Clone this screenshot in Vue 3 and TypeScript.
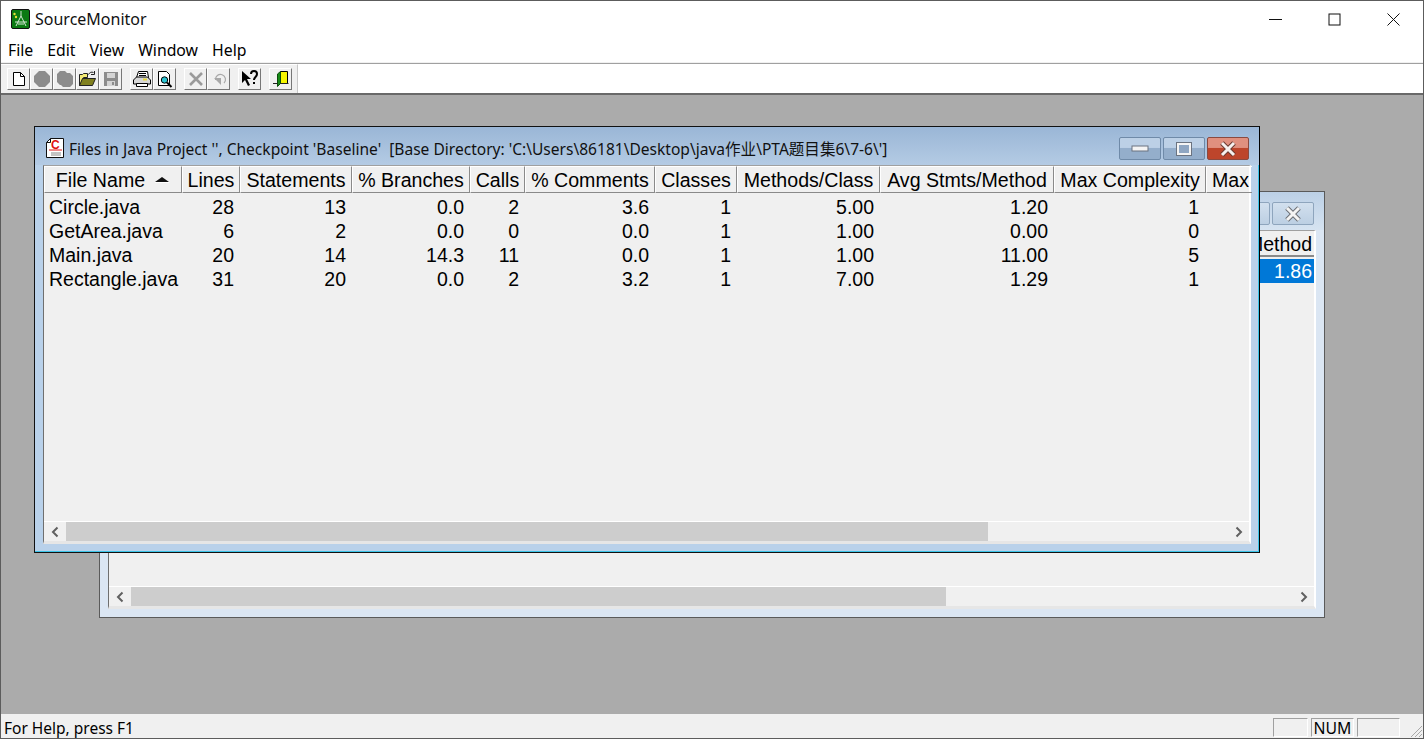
<script setup lang="ts">
// SourceMonitor main window with two MDI children
interface FileRow {
  name: string;
  values: string[];
}

const menus = ['File', 'Edit', 'View', 'Window', 'Help'];

const columns = [
  'Lines',
  'Statements',
  '% Branches',
  'Calls',
  '% Comments',
  'Classes',
  'Methods/Class',
  'Avg Stmts/Method',
  'Max Complexity',
];

const rows: FileRow[] = [
  { name: 'Circle.java', values: ['28', '13', '0.0', '2', '3.6', '1', '5.00', '1.20', '1'] },
  { name: 'GetArea.java', values: ['6', '2', '0.0', '0', '0.0', '1', '1.00', '0.00', '0'] },
  { name: 'Main.java', values: ['20', '14', '14.3', '11', '0.0', '1', '1.00', '11.00', '5'] },
  { name: 'Rectangle.java', values: ['31', '20', '0.0', '2', '3.2', '1', '7.00', '1.29', '1'] },
];

const caption =
  "Files in Java Project '', Checkpoint 'Baseline'  [Base Directory: 'C:\\Users\\86181\\Desktop\\java作业\\PTA题目集6\\7-6\\']";
</script>

<template>
  <div class="app">
    <header class="titlebar">
      <svg class="app-icon" width="19" height="20" viewBox="0 0 19 20">
        <rect x="0.5" y="0.5" width="18" height="19" rx="1.5" fill="#0b7a12" stroke="#111" />
        <circle cx="3.5" cy="5" r="1.2" fill="#e8e337" />
        <circle cx="5" cy="8" r="1.2" fill="#e8e337" />
        <path d="M10 2v5M10 7L5 17M10 7l5 10M4 13h12M7 15h6" stroke="#d8e8d8" stroke-width="1" fill="none" />
      </svg>
      <span class="app-name">SourceMonitor</span>
      <div class="win-controls">
        <svg width="13" height="13" viewBox="0 0 13 13"><path d="M0 6.5h13" stroke="#111" /></svg>
        <svg width="13" height="13" viewBox="0 0 13 13"><rect x="1" y="1" width="11" height="11" fill="none" stroke="#111" /></svg>
        <svg width="13" height="13" viewBox="0 0 13 13"><path d="M0.5 0.5l12 12M12.5 0.5l-12 12" stroke="#111" fill="none" /></svg>
      </div>
    </header>

    <nav class="menubar">
      <span v-for="m in menus" :key="m" class="menu-item">{{ m }}</span>
    </nav>

    <div class="toolbar">
      <div class="tools">
        <div class="tool-group">
          <button class="tool">
            <svg width="16" height="16" viewBox="0 0 16 16"><path d="M2.5 1.5h7l4 4v9h-11z" fill="#fff" stroke="#000" /><path d="M9.5 1.5v4h4" fill="none" stroke="#000" /></svg>
          </button>
          <button class="tool">
            <svg width="16" height="16" viewBox="0 0 16 16"><path d="M5 0h6l5 5v6l-5 5H5l-5-5V5z" fill="#8c8c8c" /></svg>
          </button>
          <button class="tool">
            <svg width="16" height="16" viewBox="0 0 16 16"><path d="M3 0h5l2 2h3l3 3v8l-3 3H6l-2-2H3l-3-3V3z" fill="#8c8c8c" /></svg>
          </button>
          <button class="tool">
            <svg width="17" height="16" viewBox="0 0 17 16">
              <path d="M0.5 14.5v-11h3l1-1h4v4h-4l-3 8z" fill="#f3ea74" stroke="#222" />
              <path d="M0.5 14.5l3-7h13l-3 7z" fill="#80801e" stroke="#222" />
              <path d="M9.5 3.5c1-2 3-3 5-2M15.5 0v3.5h-3.5" fill="none" stroke="#222" />
            </svg>
          </button>
          <button class="tool">
            <svg width="16" height="16" viewBox="0 0 16 16">
              <rect x="1" y="1" width="14" height="14" fill="#8c8c8c" />
              <rect x="4" y="2" width="8" height="5" fill="#d4d4d4" />
              <rect x="4" y="10" width="8" height="5" fill="#d4d4d4" />
              <rect x="9" y="11" width="2" height="3" fill="#8c8c8c" />
            </svg>
          </button>
        </div>
        <div class="tool-group">
          <button class="tool">
            <svg width="18" height="16" viewBox="0 0 18 16">
              <path d="M5.5 0.5h9l1 6h-12z" fill="#fff" stroke="#000" />
              <path d="M0.5 9l3-3h11l3 3v4h-17z" fill="#d8d8d8" stroke="#000" />
              <path d="M3.5 12.5h11v3h-11z" fill="#fff" stroke="#000" />
              <path d="M6 2.5h7M6 4.5h7" stroke="#000" />
              <path d="M10 8.5h4" stroke="#e8d83a" stroke-width="2" />
            </svg>
          </button>
          <button class="tool">
            <svg width="16" height="18" viewBox="0 0 16 18">
              <path d="M1.5 1.5h8l3 3v11h-11z" fill="#fff" stroke="#000" />
              <circle cx="7.5" cy="10" r="3.2" fill="#2bc4d2" stroke="#000" />
              <path d="M10 12.5l4.5 4.5" stroke="#000" stroke-width="2" />
            </svg>
          </button>
        </div>
        <div class="tool-group">
          <button class="tool">
            <svg width="16" height="16" viewBox="0 0 16 16"><path d="M2 2l12 12M14 2L2 14" stroke="#9a9a9a" stroke-width="2.6" /></svg>
          </button>
          <button class="tool">
            <svg width="16" height="16" viewBox="0 0 16 16">
              <path d="M4.5 9a5 5 0 1 1 8.5 3" fill="none" stroke="#a8a8a8" stroke-width="1.2" />
              <path d="M3 7h7v7z" fill="#a8a8a8" />
            </svg>
          </button>
        </div>
        <div class="tool-group">
          <button class="tool">
            <svg width="20" height="18" viewBox="0 0 20 18">
              <path d="M2 1v12l3-3 3 6 2-1-3-6h4z" fill="#000" />
              <path d="M11 4c0-4 6-4 6 0 0 3-3 3-3 6" fill="none" stroke="#000" stroke-width="2" />
              <rect x="13" y="12" width="2" height="2" fill="#000" />
            </svg>
          </button>
        </div>
        <div class="tool-group">
          <button class="tool">
            <svg width="18" height="18" viewBox="0 0 18 18">
              <path d="M8.5 1.5h7v12h-7z" fill="#f6f600" stroke="#000" />
              <path d="M8.5 1.5L5.5 4v12.5l3-3z" fill="#168a16" stroke="#0a4a0a" />
              <path d="M1 13.5h4.5M8.5 13.5h8" stroke="#222" />
            </svg>
          </button>
        </div>
      </div>
    </div>

    <main class="mdi">
      <!-- back window, mostly covered -->
      <section class="child back">
        <div class="caption">
          <div class="cap-buttons">
            <span class="cap-btn plain"></span>
            <span class="cap-btn plain">
              <svg width="20" height="16" viewBox="0 0 20 16"><path d="M4 2l12 12M16 2L4 14" stroke="#6b6f75" stroke-width="5" /><path d="M4 2l12 12M16 2L4 14" stroke="#f4f4f4" stroke-width="3" /></svg>
            </span>
          </div>
        </div>
        <div class="client">
          <div class="back-head"><span class="back-head-text">Method</span></div>
          <div class="back-list">
            <div class="back-row">1.86</div>
          </div>
          <div class="hscroll">
            <span class="arrow left"><svg width="8" height="12" viewBox="0 0 8 12"><path d="M6.5 1.5L2 6l4.5 4.5" fill="none" stroke="#606060" stroke-width="2" /></svg></span>
            <div class="track"><div class="thumb back-thumb"></div></div>
            <span class="arrow"><svg width="8" height="12" viewBox="0 0 8 12"><path d="M1.5 1.5L6 6l-4.5 4.5" fill="none" stroke="#606060" stroke-width="2" /></svg></span>
          </div>
        </div>
      </section>

      <!-- active window -->
      <section class="child front">
        <div class="caption">
          <svg class="doc-icon" width="20" height="21" viewBox="0 0 20 21">
            <path d="M5.5 0.5h13v19h-17v-15z" fill="#fff" stroke="#111" />
            <path d="M5.5 0.5v4h-4" fill="none" stroke="#111" />
            <text x="6" y="11" class="doc-c">C</text>
            <path d="M4 12h13" stroke="#e01010" />
            <path d="M6 15h10M6 17h10" stroke="#888" />
          </svg>
          <span class="cap-text">{{ caption }}</span>
          <div class="cap-buttons">
            <span class="cap-btn">
              <svg width="18" height="8" viewBox="0 0 18 8"><rect x="1" y="1" width="16" height="5" fill="#f4f4f4" stroke="#6b7380" /></svg>
            </span>
            <span class="cap-btn">
              <svg width="16" height="14" viewBox="0 0 16 14"><rect x="1.5" y="1.5" width="13" height="11" fill="#8fa6c2" stroke="#f4f4f4" stroke-width="3" /><rect x="0.5" y="0.5" width="15" height="13" fill="none" stroke="#6b7380" /></svg>
            </span>
            <span class="cap-btn close">
              <svg width="20" height="16" viewBox="0 0 20 16"><path d="M4 2l12 12M16 2L4 14" stroke="#6b3a30" stroke-width="5" /><path d="M4 2l12 12M16 2L4 14" stroke="#f6f0ee" stroke-width="3" /></svg>
            </span>
          </div>
        </div>
        <div class="client">
          <div class="grid head">
            <div class="hcell name-head">
              <span>File Name</span>
              <svg width="16" height="6" viewBox="0 0 16 6"><path d="M8 0l7 5H1z" fill="#111" /><path d="M1 5.5h14" stroke="#fff" /></svg>
            </div>
            <div v-for="c in columns" :key="c" class="hcell">{{ c }}</div>
            <div class="hcell last">Max</div>
          </div>
          <div class="list">
            <div v-for="r in rows" :key="r.name" class="grid row">
              <div class="cell name">{{ r.name }}</div>
              <div v-for="(v, i) in r.values" :key="i" class="cell">{{ v }}</div>
            </div>
          </div>
          <div class="hscroll">
            <span class="arrow left"><svg width="8" height="12" viewBox="0 0 8 12"><path d="M6.5 1.5L2 6l4.5 4.5" fill="none" stroke="#606060" stroke-width="2" /></svg></span>
            <div class="track"><div class="thumb front-thumb"></div></div>
            <span class="arrow"><svg width="8" height="12" viewBox="0 0 8 12"><path d="M1.5 1.5L6 6l-4.5 4.5" fill="none" stroke="#606060" stroke-width="2" /></svg></span>
          </div>
        </div>
      </section>
    </main>

    <footer class="statusbar">
      <span class="status-text">For Help, press F1</span>
      <span class="panel p1"></span>
      <span class="panel p2">NUM</span>
      <span class="panel p3"></span>
      <svg class="grip" width="14" height="14" viewBox="0 0 14 14"><path d="M13 2L2 13M13 6l-7 7M13 10l-3 3" stroke="#a8a8a8" fill="none" /></svg>
    </footer>
  </div>
</template>

<style scoped>
.app {
  width: 1424px;
  height: 739px;
  box-sizing: border-box;
  border: 1px solid #5c5c5c;
  display: flex;
  flex-direction: column;
  overflow: hidden;
  background: #fff;
  color: #000;
  font-family: "Noto Sans", "Noto Sans CJK SC", sans-serif;
  font-size: 15.8px;
}

.titlebar {
  height: 38px;
  flex: none;
  box-sizing: border-box;
  padding: 0 0 2px 10px;
  display: flex;
  align-items: center;
}

.app-icon {
  margin-right: 5px;
}

.app-name {
  font-size: 16px;
  color: #111;
}

.win-controls {
  margin-left: auto;
  display: flex;
  gap: 46px;
  padding-right: 23px;
}

.menubar {
  height: 25px;
  flex: none;
  box-sizing: border-box;
  padding: 0 0 2px 7px;
  display: flex;
  align-items: center;
  gap: 14px;
  border-bottom: 1px solid #a0a0a0;
  box-shadow: inset 0 -1px 0 #f0f0f0;
}

.toolbar {
  height: 29px;
  flex: none;
  display: flex;
  background: #fff;
}

.tools {
  width: 297px;
  box-sizing: border-box;
  padding: 3px 0 0 6px;
  background: #f0f0f0;
  border-top: 1px solid #fff;
  display: flex;
  gap: 8px;
  align-items: flex-start;
  border-right: 1px solid #c8c8c8;
}

.tool-group {
  display: flex;
}

.tool {
  width: 23px;
  height: 22px;
  box-sizing: border-box;
  padding: 0;
  background: #f0f0f0;
  border: 1px solid;
  border-color: #fff #777 #777 #fff;
  display: flex;
  align-items: center;
  justify-content: center;
}

.mdi {
  flex: 1;
  position: relative;
  background: #ababab;
  border-top: 2px solid #696969;
  overflow: hidden;
}

.child {
  position: absolute;
  width: 1226px;
  height: 427px;
  box-sizing: border-box;
  display: flex;
  flex-direction: column;
  border: 1px solid #111;
}

.front {
  left: 33px;
  top: 31px;
  background: #b9d1ea;
  border-right-color: #000;
  box-shadow: inset -1px -1px 0 #3cc4e8;
}

.back {
  left: 98px;
  top: 96px;
  background: #dbe6f3;
  border-color: #5a5a5a;
}

.caption {
  height: 38px;
  flex: none;
  box-sizing: border-box;
  display: flex;
  align-items: center;
  padding: 5px 0 0 10px;
  background: linear-gradient(#9ab6d6, #b4cbe4);
}

.back .caption {
  background: linear-gradient(#bcd0e6, #d6e3f1);
}

.doc-icon {
  margin-right: 4px;
}

.doc-c {
  font-family: "Liberation Sans", sans-serif;
  font-weight: 700;
  font-size: 12px;
  fill: #e01010;
}

.cap-text {
  font-size: 15.55px;
  color: #111;
  white-space: pre;
}

.cap-buttons {
  margin-left: auto;
  display: flex;
  gap: 2px;
  padding-right: 10px;
}

.cap-btn {
  width: 42px;
  height: 23px;
  box-sizing: border-box;
  border: 1px solid #6f8aa8;
  border-radius: 2px;
  background: linear-gradient(#bcd0e6 0 45%, #94aecb 50% 100%);
  display: flex;
  align-items: center;
  justify-content: center;
}

.cap-btn.close {
  border-color: #8a4a40;
  background: linear-gradient(#e0907f 0 45%, #bd452b 50% 100%);
}

.cap-btn.plain {
  background: linear-gradient(#d2e0ee, #bccfe3);
  border-color: #8ea5bd;
}

.client {
  flex: 1;
  margin: 0 8px 8px 8px;
  display: flex;
  flex-direction: column;
  min-height: 0;
  background: #f0f0f0;
  border-left: 1px solid #6f6f6f;
  border-top: 1px solid #a0a0a0;
  border-right: 2px solid #fff;
  border-bottom: 3px solid #e6e6e6;
  font-family: "Liberation Sans", sans-serif;
  font-size: 19.5px;
}

.grid {
  display: grid;
  grid-template-columns: 138px 58px 112px 118px 55px 130px 82px 143px 174px 152px 46px;
}

.head {
  height: 27px;
  flex: none;
}

.hcell {
  box-sizing: border-box;
  border: 1px solid;
  border-color: #fff #8a8a8a #8a8a8a #fff;
  padding-top: 1px;
  font-size: 19.6px;
  display: flex;
  align-items: center;
  justify-content: center;
  white-space: nowrap;
  overflow: hidden;
}

.name-head {
  gap: 9px;
}

.hcell.last {
  justify-content: flex-start;
  padding-left: 5px;
  border-right: 0;
}

.list {
  flex: 1;
  padding-top: 2px;
  min-height: 0;
}

.row {
  height: 24px;
  align-items: center;
}

.cell {
  text-align: right;
  padding-right: 6px;
  white-space: nowrap;
}

.cell:nth-child(10) {
  padding-right: 7px;
}

.cell.name {
  text-align: left;
  padding-left: 5px;
  padding-right: 0;
}

.hscroll {
  height: 20px;
  box-sizing: border-box;
  flex: none;
  display: flex;
  border-top: 1px solid #fff;
  background: #f0f0f0;
}

.arrow {
  width: 21px;
  flex: none;
  display: flex;
  align-items: center;
  justify-content: center;
}

.arrow.left {
  width: 22px;
}

.track {
  flex: 1;
}

.thumb {
  height: 100%;
  background: #cdcdcd;
}

.front-thumb {
  width: 922px;
}

.back-thumb {
  width: 815px;
}

.back-head {
  height: 26px;
  flex: none;
  display: flex;
  justify-content: flex-end;
  align-items: center;
  padding: 3px 2px 0 0;
  border-bottom: 2px solid #8a8a8a;
  box-sizing: border-box;
}

.back-list {
  flex: 1;
  padding-top: 2px;
}

.back-row {
  height: 24px;
  line-height: 24px;
  text-align: right;
  padding-right: 2px;
  margin-left: 1150px;
  background: #0078d7;
  color: #fff;
}

.statusbar {
  height: 24px;
  flex: none;
  display: flex;
  align-items: flex-end;
  background: #f0f0f0;
  position: relative;
}

.status-text {
  margin-left: 3px;
  margin-right: auto;
  line-height: 20px;
  font-size: 15.5px;
}

.panel {
  height: 19px;
  box-sizing: border-box;
  border: 1px solid;
  border-color: #a0a0a0 #fff #fff #a0a0a0;
  display: flex;
  align-items: center;
  justify-content: center;
  margin: 0 3px 1px 0;
}

.p1 {
  width: 35px;
}

.p2 {
  width: 43px;
}

.p3 {
  width: 43px;
  margin-right: 23px;
}

.grip {
  position: absolute;
  right: 0;
  bottom: 0;
}
</style>
